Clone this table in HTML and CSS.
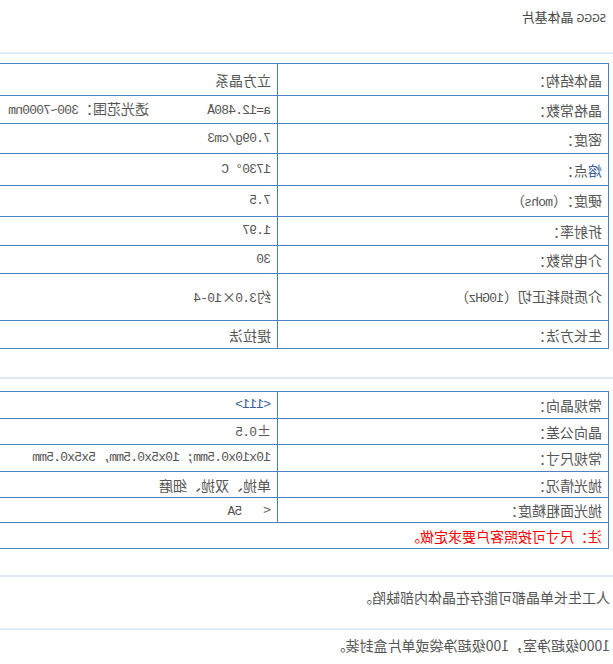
FILE: index.html
```html
<!DOCTYPE html>
<html lang="zh">
<head>
<meta charset="utf-8">
<title>SGGG 晶体基片</title>
<link rel="stylesheet" href="styles.css">
</head>
<body>
<div class="mirror">
  <div class="page">
    <h1 class="title"><span class="latin">SGGG</span> 晶体基片</h1>
    <div class="sep"></div>
    <table class="spec spec-a">
      <tr><td class="k">晶体结构：</td><td class="v">立方晶系</td></tr>
      <tr><td class="k">晶格常数：</td><td class="v"><span class="lat n">a=12.480Å</span><span>透光范围：<span class="n">300~7000nm</span></span></td></tr>
      <tr><td class="k">密度：</td><td class="v n">7.09g/cm3</td></tr>
      <tr><td class="k"><span class="link">熔</span>点：</td><td class="v n">1730° C</td></tr>
      <tr><td class="k">硬度：（<span class="n">mohs</span>）</td><td class="v n">7.5</td></tr>
      <tr><td class="k">折射率：</td><td class="v n">1.97</td></tr>
      <tr><td class="k">介电常数：</td><td class="v n">30</td></tr>
      <tr class="tall"><td class="k">介质损耗正切（<span class="n">10GHz</span>）</td><td class="v">约<span class="n">3.0</span>×<span class="n">10-4</span></td></tr>
      <tr><td class="k">生长方法：</td><td class="v">提拉法</td></tr>
    </table>
    <div class="sep sep-b"></div>
    <table class="spec spec-b">
      <tr><td class="k">常规晶向：</td><td class="v n"><span class="link">&lt;111&gt;</span></td></tr>
      <tr><td class="k">晶向公差：</td><td class="v">±<span class="n">0.5</span></td></tr>
      <tr><td class="k">常规尺寸：</td><td class="v n">10x10x0.5mm; 10x5x0.5mm, 5x5x0.5mm</td></tr>
      <tr><td class="k">抛光情况：</td><td class="v">单抛、双抛、细磨</td></tr>
      <tr><td class="k">抛光面粗糙度：</td><td class="v">&lt;<span class="n">&nbsp;&nbsp; 5A</span></td></tr>
      <tr><td class="note" colspan="2">注：尺寸可按照客户要求定做。</td></tr>
    </table>
    <div class="sep sep-c"></div>
    <p class="para para-1">人工生长单晶都可能存在晶体内部缺陷。</p>
    <div class="sep"></div>
    <p class="para para-2">1000级超净室，100级超净袋或单片盒封装。</p>
  </div>
</div>
</body>
</html>
```

FILE: styles.css
```css
html, body {
  margin: 0;
  padding: 0;
  background: #fff;
}

.mirror {
  width: 613px;
  height: 664px;
  overflow: hidden;
  transform: scaleX(-1);
  transform-origin: center;
}

.page {
  width: 640px;
  font-family: "Noto Sans CJK SC", "DejaVu Sans", sans-serif;
  color: #555;
  font-size: 14px;
}

.title {
  margin: 0;
  padding: 8px 0 0 7px;
  height: 44px;
  font-size: 13px;
  font-weight: normal;
  color: #444;
  line-height: 18px;
}

.title .latin {
  font-family: "DejaVu Sans", sans-serif;
  font-size: 10px;
}

.sep {
  height: 2px;
  background: #dfe9f7;
  width: 100%;
}

.spec {
  border-collapse: collapse;
  margin-left: 4px;
  width: 636px;
  line-height: 20px;
}

.spec-a {
  margin-top: 9px;
}

.spec td {
  border: 1px solid #4f80bf;
  padding: 0 6px;
  vertical-align: middle;
}

.spec-a tr {
  height: 30px;
}

.spec-a tr:nth-child(1) { height: 32px; }
.spec-a tr:nth-child(2) { height: 28px; }
.spec-a tr:nth-child(4) { height: 32px; }
.spec-a tr:nth-child(5) { height: 31px; }
.spec-a tr:nth-child(6) { height: 29px; }
.spec-a tr:nth-child(7) { height: 28px; }
.spec-a tr:nth-child(9) { height: 28px; }

.spec-a tr.tall {
  height: 47px;
}

.spec-b {
  margin-top: 12px;
}

.spec-b tr {
  height: 26px;
}

.spec-b tr:nth-child(1),
.spec-b tr:nth-child(3) {
  height: 27px;
}

.spec-b tr:nth-child(5) {
  height: 25px;
}

.k {
  width: 318px;
  padding-left: 3px;
}

.n {
  font-family: "Liberation Mono", "DejaVu Sans Mono", monospace;
  font-size: 13px;
  letter-spacing: -0.8px;
}

.lat {
  display: inline-block;
  width: 122px;
}

.link {
  color: #3a5f9a;
}

.note {
  color: #f00;
  padding-left: 3px;
}

.sep-b {
  margin-top: 28px;
}

.sep-c {
  margin-top: 26px;
}

.para {
  margin: 0;
  line-height: 20px;
  padding-left: 3px;
}

.para-1 {
  padding-top: 10px;
  height: 41px;
}

.para-2 {
  padding-top: 5px;
  height: 29px;
}
```
